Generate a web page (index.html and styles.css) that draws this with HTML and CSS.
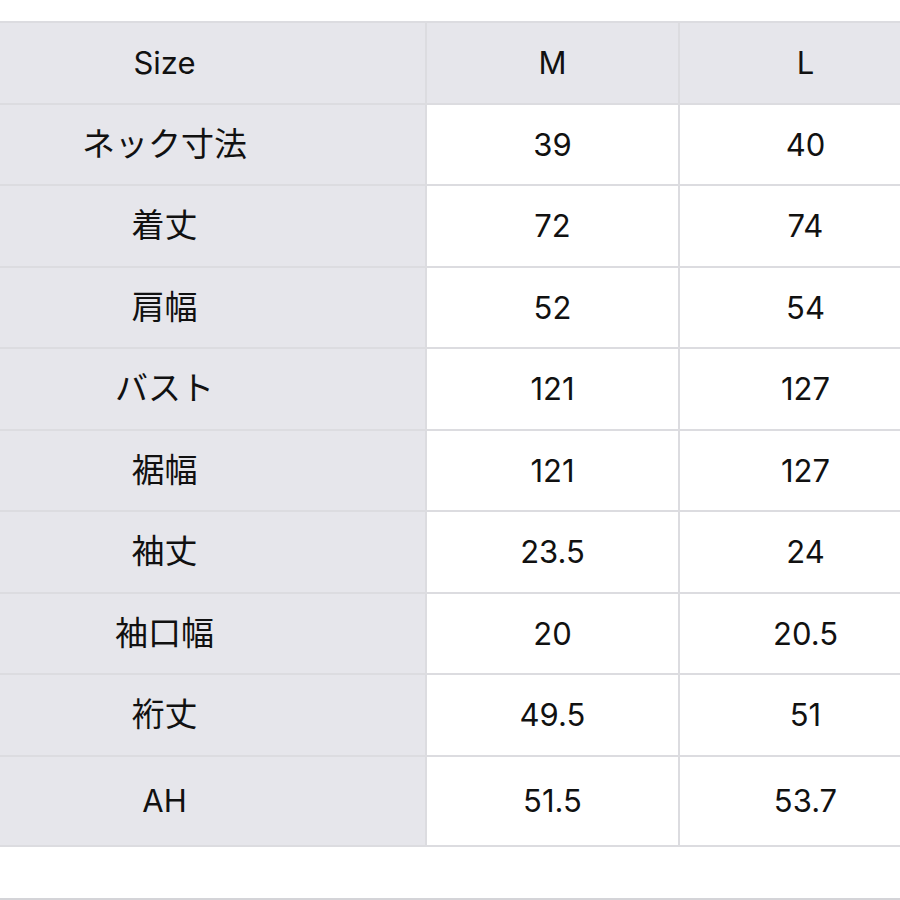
FILE: index.html
```html
<!DOCTYPE html>
<html lang="ja">
<head>
<meta charset="utf-8">
<link rel="stylesheet" href="styles.css">
</head>
<body>
<div class="page">
  <div class="size-table">
    <div class="cell head">Size</div><div class="cell head">M</div><div class="cell head">L</div>
    <div class="cell label">ネック寸法</div><div class="cell">39</div><div class="cell">40</div>
    <div class="cell label">着丈</div><div class="cell">72</div><div class="cell">74</div>
    <div class="cell label">肩幅</div><div class="cell">52</div><div class="cell">54</div>
    <div class="cell label">バスト</div><div class="cell">121</div><div class="cell">127</div>
    <div class="cell label">裾幅</div><div class="cell">121</div><div class="cell">127</div>
    <div class="cell label">袖丈</div><div class="cell">23.5</div><div class="cell">24</div>
    <div class="cell label">袖口幅</div><div class="cell">20</div><div class="cell">20.5</div>
    <div class="cell label">裄丈</div><div class="cell">49.5</div><div class="cell">51</div>
    <div class="cell label latin">AH</div><div class="cell">51.5</div><div class="cell">53.7</div>
  </div>
  <div class="footer-line"></div>
</div>
</body>
</html>
```

FILE: styles.css
```css
html, body {
  margin: 0;
  padding: 0;
  background: #ffffff;
}

.page {
  width: 900px;
  height: 900px;
  overflow: hidden;
  padding-top: 21px;
  box-sizing: border-box;
}

.size-table {
  display: grid;
  grid-template-columns: 521px 251px 251px;
  grid-template-rows: repeat(9, 79.5px) 88px;
  gap: 2px;
  background: #dcdce0;
  border-top: 2px solid #dcdce0;
  border-bottom: 2px solid #dcdce0;
  margin-left: -96px;
  width: max-content;
  font-family: "Inter", "Noto Sans CJK JP", sans-serif;
  font-size: 31px;
  color: #111111;
}

.cell {
  background: #ffffff;
  display: flex;
  align-items: center;
  justify-content: center;
  line-height: 1;
}

.head,
.label {
  background: #e6e6eb;
}

.label {
  font-family: "Noto Sans CJK JP", sans-serif;
  font-size: 33px;
  padding-bottom: 4px;
}

.label.latin {
  font-family: "Inter", "Noto Sans CJK JP", sans-serif;
  font-size: 31px;
  padding-bottom: 0;
}

.footer-line {
  margin-top: 51px;
  border-top: 2px solid #d4d4d8;
}
```
